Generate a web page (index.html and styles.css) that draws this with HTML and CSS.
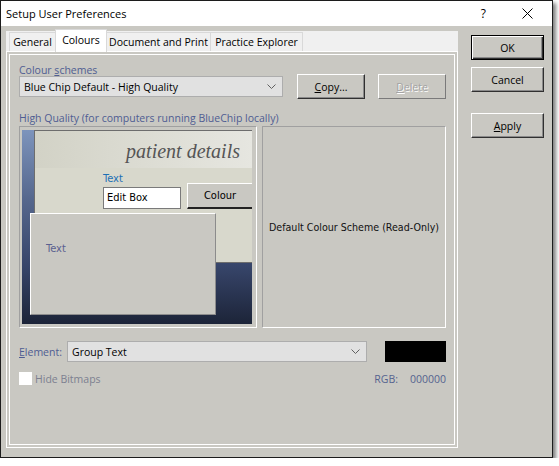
FILE: index.html
```html
<!DOCTYPE html>
<html>
<head>
<meta charset="utf-8">
<link rel="stylesheet" href="styles.css">
</head>
<body>
<div class="window">
  <div class="titlebar">
    <span class="title">Setup User Preferences</span>
    <div class="caption-btns">
      <span class="help">?</span>
      <svg class="close" width="11" height="11" viewBox="0 0 11 11"><path d="M0.5 0.5L10.5 10.5M10.5 0.5L0.5 10.5" stroke="#000" stroke-width="1" fill="none"/></svg>
    </div>
  </div>
  <div class="main">
    <div class="tabctl">
      <div class="tabs">
        <div class="tab tab-general">General</div>
        <div class="tab tab-colours active">Colours</div>
        <div class="tab tab-doc">Document and Print</div>
        <div class="tab tab-practice">Practice Explorer</div>
      </div>
      <div class="page">
        <div class="label">Colour <u>s</u>chemes</div>
        <div class="scheme-row">
          <div class="combo combo-scheme"><span>Blue Chip Default - High Quality</span><svg class="chev" width="9" height="5" viewBox="0 0 9 5"><polyline points="0.5,0.5 4.5,4.5 8.5,0.5" stroke="#606060" fill="none"/></svg></div>
          <div class="btn btn-copy"><span><u>C</u>opy...</span></div>
          <div class="btn btn-delete disabled"><span><u>D</u>elete</span></div>
        </div>
        <div class="label label-hq">High Quality (for computers running BlueChip locally)</div>
        <div class="preview-row">
          <div class="preview-frame">
            <div class="canvas">
              <div class="pane">
                <div class="pane-head">patient details</div>
              </div>
              <div class="pv-text">Text</div>
              <div class="pv-edit">Edit Box</div>
              <div class="pv-button">Colour</div>
              <div class="pv-group"><span class="pv-group-text">Text</span></div>
            </div>
          </div>
          <div class="readonly">Default Colour Scheme (Read-Only)</div>
        </div>
        <div class="element-row">
          <div class="elabel"><u>E</u>lement:</div>
          <div class="combo combo-element"><span>Group Text</span><svg class="chev" width="9" height="5" viewBox="0 0 9 5"><polyline points="0.5,0.5 4.5,4.5 8.5,0.5" stroke="#606060" fill="none"/></svg></div>
          <div class="swatch"></div>
        </div>
        <div class="check-row">
          <span class="checkbox"></span>
          <span class="check-label">Hide Bitmaps</span>
          <span class="rgb"><span class="rgb-key">RGB:</span><span>000000</span></span>
        </div>
      </div>
    </div>
    <div class="side">
      <div class="btn btn-side default">OK</div>
      <div class="btn btn-side btn-cancel">Cancel</div>
      <div class="btn btn-side btn-apply"><span><u>A</u>pply</span></div>
    </div>
  </div>
</div>
</body>
</html>
```

FILE: styles.css
```css
* { box-sizing: border-box; }

body {
  margin: 0;
  background: #fff;
  font-family: "Open Sans", "Noto Sans", sans-serif;
  font-size: 10.5px;
  color: #000;
}

.window {
  width: 553px;
  height: 458px;
  border: 1px solid #1c1c1c;
  background: #c9c8c2;
  box-shadow: 3px 3px 4px rgba(0, 0, 0, 0.5);
  display: flex;
  flex-direction: column;
}

.titlebar {
  height: 25px;
  flex: none;
  background: #fff;
  display: flex;
  align-items: center;
  padding-left: 5px;
  font-size: 11px;
}

.title { flex: 1; }

.caption-btns {
  display: flex;
  align-items: center;
  gap: 36px;
  margin-right: 19px;
}

.help { font-size: 12px; line-height: 12px; }

.main {
  flex: 1;
  display: flex;
  padding: 5px 0 0 5px;
}

.tabctl {
  width: 452px;
  height: 417px;
  display: flex;
  flex-direction: column;
  margin-right: 13px;
}

.tabs {
  height: 20px;
  flex: none;
  background: #f0f0f0;
  display: flex;
  align-items: flex-end;
  padding-left: 3px;
}

.tab {
  height: 19px;
  border: 1px solid #d9d9d9;
  border-bottom: none;
  background: #f0f0f0;
  display: flex;
  align-items: center;
  justify-content: center;
  margin-left: -1px;
  white-space: nowrap;
}

.tab-general { width: 47px; margin-left: 0; }
.tab-colours { width: 52px; }
.tab-doc { width: 105px; }
.tab-practice { width: 93px; }

.tab.active {
  height: 23px;
  background: #fff;
  margin-bottom: -1px;
  padding-bottom: 3px;
  position: relative;
  z-index: 1;
}

.page {
  flex: 1;
  background: #c9c8c2;
  border: 1px solid #fff;
  box-shadow: inset 0 0 0 2px #c9c8c2, inset 0 0 0 3px #fff;
  padding: 11px 0 0 12px;
}

.label {
  line-height: 14px;
  color: #4f5d92;
}

.scheme-row {
  display: flex;
  align-items: center;
  height: 25px;
  margin-top: -3px;
}

.combo {
  height: 21px;
  background: #e1e1e1;
  border: 1px solid #adadad;
  display: flex;
  align-items: center;
  justify-content: space-between;
  padding: 0 6px 0 4px;
}

.combo-scheme { width: 264px; margin-right: 14px; }

.chev { flex: none; }

.btn {
  width: 68px;
  height: 25px;
  background: #c9c8c2;
  border: 1px solid;
  border-color: #fff #303030 #303030 #fff;
  box-shadow: inset -1px -1px 0 #8a8a8a;
  display: flex;
  align-items: center;
  justify-content: center;
}

.btn-delete { margin-left: 13px; }

.btn.disabled {
  color: #a3a3a3;
  text-shadow: 1px 1px 0 #fff;
  border-color: #fff #7a7a7a #7a7a7a #fff;
  box-shadow: none;
}

.label-hq { margin-top: 12px; }

.preview-row {
  display: flex;
  gap: 5px;
  margin-top: 1px;
  height: 202px;
}

.preview-frame {
  width: 238px;
  border: 1px solid;
  border-color: #a0a0a0 #fff #fff #a0a0a0;
  padding: 3px 4px 3px 2px;
}

.canvas {
  position: relative;
  height: 100%;
  background: linear-gradient(#7d94bc 0%, #56688e 35%, #37456a 70%, #1c2438 100%);
  font-family: "DejaVu Sans Condensed", "Liberation Sans", sans-serif;
  font-size: 11px;
}

.pane {
  position: absolute;
  left: 12px;
  top: 0;
  right: 0;
  height: 133px;
  background: #d8d8cc;
  border: 1px solid #6d6d6d;
  border-right: none;
}

.pane-head {
  height: 37px;
  background: linear-gradient(to right, #d2d2c6, #e6e6e0);
  text-align: right;
  padding: 8px 12px 0 0;
  font-family: "Liberation Serif", serif;
  font-style: italic;
  font-size: 20px;
  line-height: 24px;
  color: #555;
}

.pv-text {
  position: absolute;
  left: 81px;
  top: 42px;
  line-height: 14px;
  color: #1c6fb5;
}

.pv-edit {
  position: absolute;
  left: 81px;
  top: 57px;
  width: 78px;
  height: 22px;
  background: #fff;
  border: 1px solid #7a7a7a;
  padding-left: 3px;
  line-height: 20px;
}

.pv-button {
  position: absolute;
  left: 165px;
  top: 53px;
  right: 0;
  height: 26px;
  background: #c9c8c2;
  border-top: 1px solid #fff;
  border-left: 1px solid #fff;
  border-bottom: 2px solid #222;
  display: flex;
  align-items: center;
  justify-content: center;
}

.pv-group {
  position: absolute;
  left: 8px;
  top: 83px;
  width: 186px;
  height: 102px;
  background: #c9c8c2;
  border: 1px solid;
  border-color: #fff #8c8c8c #8c8c8c #fff;
}

.pv-group-text {
  position: absolute;
  left: 15px;
  top: 28px;
  line-height: 14px;
  color: #5a6090;
}

.readonly {
  width: 184px;
  border: 1px solid;
  border-color: #a0a0a0 #fff #fff #a0a0a0;
  display: flex;
  align-items: center;
  justify-content: center;
  font-family: "DejaVu Sans Condensed", "Liberation Sans", sans-serif;
  font-size: 10.6px;
  color: #111;
}

.element-row {
  display: flex;
  align-items: center;
  margin-top: 13px;
  height: 21px;
}

.elabel { width: 48px; color: #4f5d92; }

.combo-element { width: 300px; }

.swatch {
  width: 61px;
  height: 21px;
  margin-left: 18px;
  background: #000;
}

.check-row {
  display: flex;
  align-items: center;
  margin-top: 10px;
  height: 13px;
  width: 427px;
}

.checkbox {
  width: 13px;
  height: 13px;
  background: #fff;
}

.check-label { margin-left: 3px; color: #7c8090; }

.rgb {
  margin-left: auto;
  color: #55638f;
  display: flex;
  gap: 12px;
}

.side {
  display: flex;
  flex-direction: column;
  margin-top: 4px;
}

.btn-side { width: 73px; }

.btn.default {
  border: 1px solid #000;
  box-shadow: inset 1px 1px 0 #fff, inset -1px -1px 0 #303030, inset -2px -2px 0 #8a8a8a;
}

.btn-cancel { margin-top: 7px; }
.btn-apply { margin-top: 21px; }
```
